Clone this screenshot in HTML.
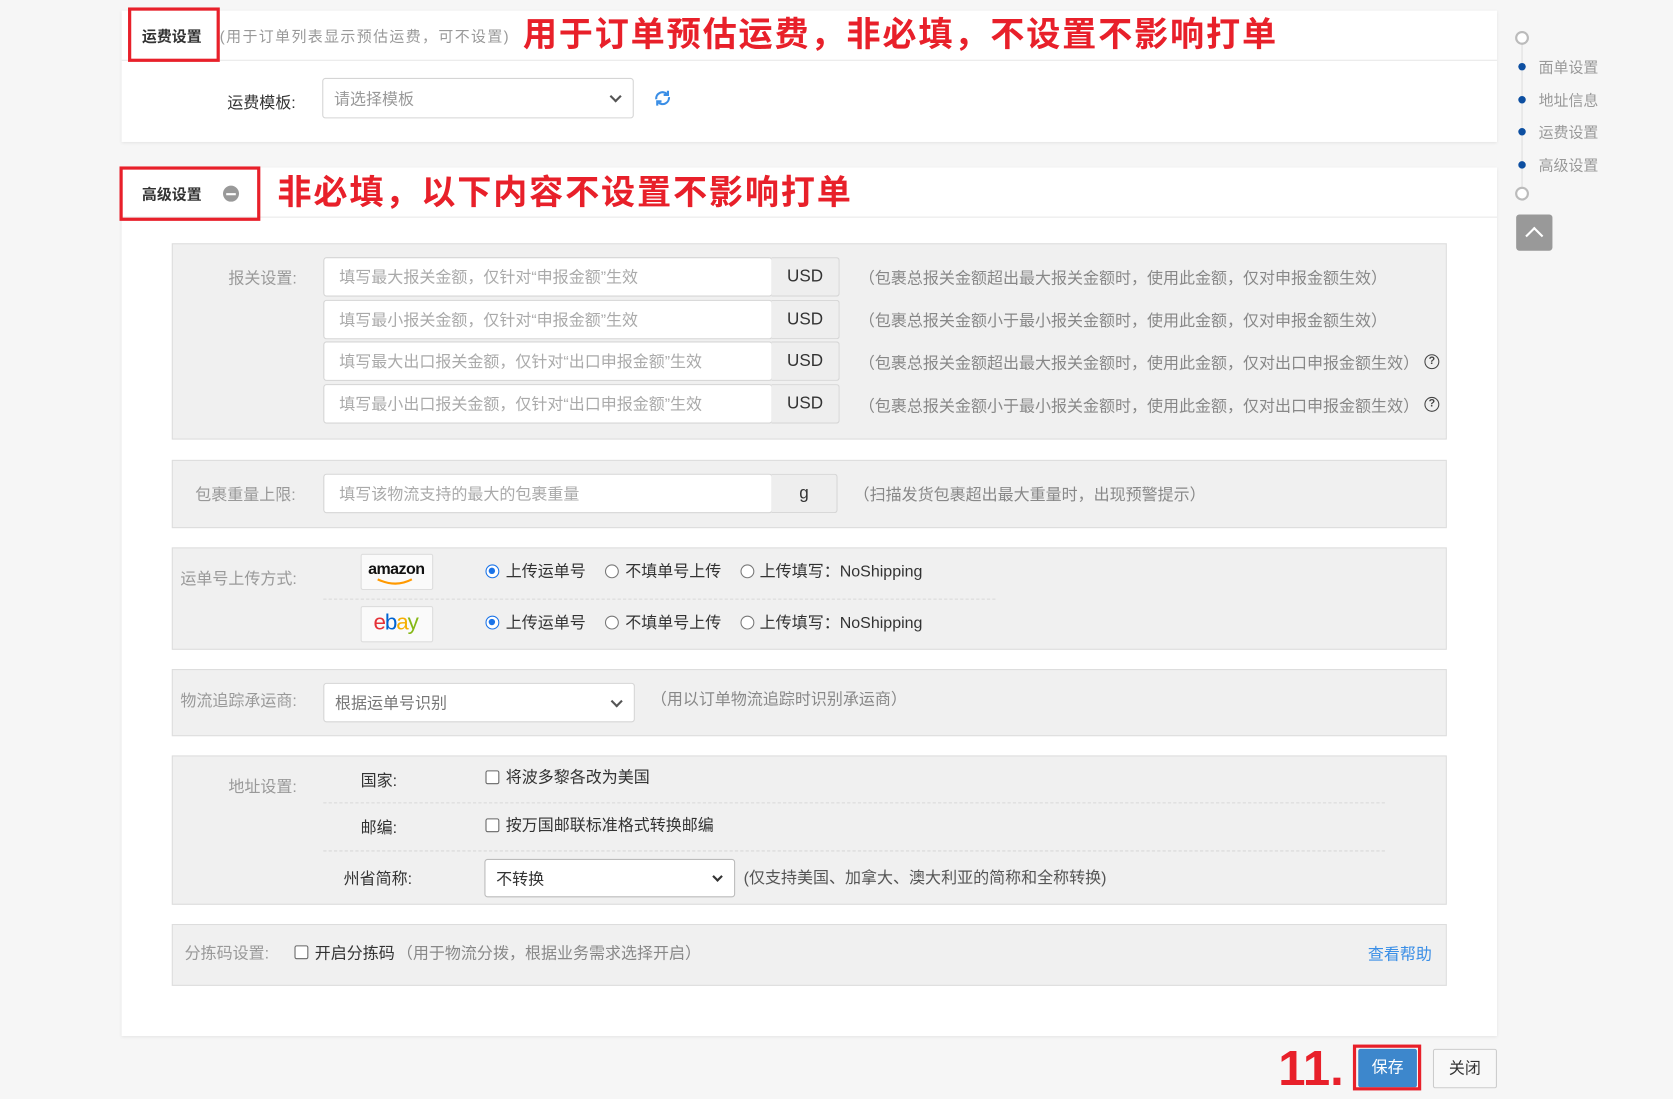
<!DOCTYPE html>
<html><head><meta charset="utf-8"><style>
*{box-sizing:border-box;margin:0;padding:0}
html,body{width:1673px;height:1099px;overflow:hidden;background:#f6f6f6}
body{font-family:"Liberation Sans","Noto Sans CJK SC",sans-serif;font-size:14px;color:#333}
#w{position:absolute;left:0;top:0;width:1568px;height:1030px;transform:scale(1.06697);transform-origin:0 0}
.a{position:absolute;white-space:nowrap}
.card{position:absolute;background:#fff;box-shadow:0 1px 3px rgba(0,0,0,.08)}
.hr{position:absolute;height:1px;background:#e8e8e8}
.red{position:absolute;border:3px solid #e8202a}
.ann{position:absolute;color:#e8202a;font-weight:bold;font-size:32px;white-space:nowrap;line-height:1;letter-spacing:1.7px}
.sec{position:absolute;left:161px;width:1195px;background:#f0f0f0;border:1px solid #ddd}
.lab{position:absolute;color:#999;font-size:15px;white-space:nowrap;transform:translateY(-50%)}
.inp{position:absolute;background:#fff;border:1px solid #d5d5d5;border-radius:3px;color:#aaa;font-size:15px;padding-left:14px;display:flex;align-items:center}
.add{position:absolute;background:#eee;border:1px solid #d5d5d5;border-left:none;border-radius:0 3px 3px 0;font-size:16px;color:#333;display:flex;align-items:center;justify-content:center}
.hint{position:absolute;color:#888;font-size:15px;white-space:nowrap;transform:translateY(-50%)}
.q{position:absolute;width:14px;height:14px;border:1.5px solid #444;border-radius:50%;font-size:10px;font-weight:bold;text-align:center;line-height:11px;color:#444}
.rad{position:absolute;width:13px;height:13px;border:1px solid #777;border-radius:50%;background:#fff}
.rad.on{border:1.5px solid #1a73e8}
.rad.on::after{content:"";position:absolute;left:2px;top:2px;width:6px;height:6px;border-radius:50%;background:#1a73e8}
.t{position:absolute;font-size:15px;color:#333;white-space:nowrap;transform:translateY(-50%)}
.cb{position:absolute;width:13px;height:13px;border:1px solid #666;border-radius:2px;background:#fff}
.dash{position:absolute;border-top:1px dashed #d8d8d8}
.sel{position:absolute;background:#fff;border:1px solid #d5d5d5;border-radius:3px;font-size:15px;padding-left:10px;display:flex;align-items:center}
.chev{position:absolute;right:12px;top:50%;width:8px;height:8px;border-right:2px solid #555;border-bottom:2px solid #555;transform:translateY(-70%) rotate(45deg)}
.logo{position:absolute;left:338px;width:68px;height:34px;background:#fafafa;border:1px solid #ddd;border-radius:2px}
.nav{position:absolute;left:1442px;color:#999;font-size:14px;transform:translateY(-50%)}
.dot{position:absolute;left:1423px;width:7px;height:7px;border-radius:50%;background:#0d4fa1}
.hol{position:absolute;left:1420px;width:13px;height:13px;border-radius:50%;border:2px solid #bbb;background:#fff}
</style></head><body><div id="w">

<div class="card" style="left:114px;top:10px;width:1289px;height:123px"></div>
<div class="hr" style="left:114px;top:56px;width:1289px"></div>
<div class="a" style="left:133px;top:24px;font-size:14px;font-weight:bold;color:#333">运费设置</div>
<div class="a" style="left:206px;top:24px;font-size:14px;color:#999;letter-spacing:1.3px">(用于订单列表显示预估运费，可不设置)</div>
<div class="red" style="left:120px;top:7px;width:86px;height:51px"></div>
<div class="ann" style="left:490px;top:16px">用于订单预估运费，非必填，不设置不影响打单</div>
<div class="a" style="left:213px;top:85px;font-size:15px">运费模板:</div>
<div class="sel" style="left:302px;top:73px;width:292px;height:38px;color:#999">请选择模板<span class="chev"></span></div>
<svg class="a" style="left:611px;top:82px" width="20" height="20" viewBox="0 0 20 20"><path d="M4 11a6 6 0 0 1 10-5" fill="none" stroke="#3a8ee6" stroke-width="2"/><path d="M15 3v4h-4" fill="none" stroke="#3a8ee6" stroke-width="2"/><path d="M16 9a6 6 0 0 1-10 5" fill="none" stroke="#3a8ee6" stroke-width="2"/><path d="M5 17v-4h4" fill="none" stroke="#3a8ee6" stroke-width="2"/></svg>

<div class="card" style="left:114px;top:157px;width:1289px;height:814px"></div>
<div class="hr" style="left:114px;top:203px;width:1289px"></div>
<div class="a" style="left:133px;top:172px;font-size:14px;font-weight:bold;color:#333">高级设置</div>
<div class="a" style="left:209px;top:174px;width:15px;height:15px;border-radius:50%;background:#999"><div style="position:absolute;left:3px;top:6.5px;width:9px;height:2px;background:#fff"></div></div>
<div class="red" style="left:112px;top:156px;width:132px;height:51px"></div>
<div class="ann" style="left:260px;top:164px">非必填，以下内容不设置不影响打单</div>

<div class="sec" style="top:228px;height:184px"></div>
<div class="lab" style="left:214px;top:260px">报关设置:</div>
<div class="inp" style="left:303px;top:241px;width:421px;height:37px">填写最大报关金额，仅针对“申报金额”生效</div><div class="add" style="left:723px;top:241px;width:64px;height:37px">USD</div>
<div class="inp" style="left:303px;top:281px;width:421px;height:37px">填写最小报关金额，仅针对“申报金额”生效</div><div class="add" style="left:723px;top:281px;width:64px;height:37px">USD</div>
<div class="inp" style="left:303px;top:320px;width:421px;height:37px">填写最大出口报关金额，仅针对“出口申报金额”生效</div><div class="add" style="left:723px;top:320px;width:64px;height:37px">USD</div>
<div class="inp" style="left:303px;top:360px;width:421px;height:37px">填写最小出口报关金额，仅针对“出口申报金额”生效</div><div class="add" style="left:723px;top:360px;width:64px;height:37px">USD</div>
<div class="hint" style="left:805px;top:260px">（包裹总报关金额超出最大报关金额时，使用此金额，仅对申报金额生效）</div>
<div class="hint" style="left:805px;top:300px">（包裹总报关金额小于最小报关金额时，使用此金额，仅对申报金额生效）</div>
<div class="hint" style="left:805px;top:340px">（包裹总报关金额超出最大报关金额时，使用此金额，仅对出口申报金额生效）</div>
<div class="hint" style="left:805px;top:380px">（包裹总报关金额小于最小报关金额时，使用此金额，仅对出口申报金额生效）</div>
<div class="q" style="left:1335px;top:332px">?</div>
<div class="q" style="left:1335px;top:372px">?</div>

<div class="sec" style="top:431px;height:64px"></div>
<div class="lab" style="left:183px;top:463px">包裹重量上限:</div>
<div class="inp" style="left:303px;top:444px;width:421px;height:37px">填写该物流支持的最大的包裹重量</div><div class="add" style="left:723px;top:444px;width:62px;height:37px">g</div>
<div class="hint" style="left:800px;top:463px">（扫描发货包裹超出最大重量时，出现预警提示）</div>

<div class="sec" style="top:513px;height:96px"></div>
<div class="lab" style="left:169px;top:542px">运单号上传方式:</div>
<div class="logo" style="top:519px"><div style="position:absolute;left:6px;top:5px;font-weight:bold;font-size:15px;color:#111;letter-spacing:-.5px">amazon</div><svg style="position:absolute;left:14px;top:22px" width="36" height="8"><path d="M1 1q17 8 32 0" fill="none" stroke="#f90" stroke-width="2"/></svg></div>
<div class="dash" style="left:303px;top:561px;width:630px"></div>
<div class="logo" style="top:568px"><div style="position:absolute;left:11px;top:3px;font-size:21px;letter-spacing:-1px"><span style="color:#e53238">e</span><span style="color:#0064d2">b</span><span style="color:#f5af02">a</span><span style="color:#86b817">y</span></div></div>
<div class="rad on" style="left:455px;top:529px"></div><div class="t" style="left:474px;top:535px">上传运单号</div>
<div class="rad" style="left:567px;top:529px"></div><div class="t" style="left:586px;top:535px">不填单号上传</div>
<div class="rad" style="left:694px;top:529px"></div><div class="t" style="left:712px;top:535px">上传填写：NoShipping</div>
<div class="rad on" style="left:455px;top:577px"></div><div class="t" style="left:474px;top:583px">上传运单号</div>
<div class="rad" style="left:567px;top:577px"></div><div class="t" style="left:586px;top:583px">不填单号上传</div>
<div class="rad" style="left:694px;top:577px"></div><div class="t" style="left:712px;top:583px">上传填写：NoShipping</div>

<div class="sec" style="top:627px;height:63px"></div>
<div class="lab" style="left:169px;top:656px">物流追踪承运商:</div>
<div class="sel" style="left:303px;top:640px;width:292px;height:37px;color:#777">根据运单号识别<span class="chev"></span></div>
<div class="hint" style="left:610px;top:655px">（用以订单物流追踪时识别承运商）</div>

<div class="sec" style="top:708px;height:140px"></div>
<div class="lab" style="left:214px;top:737px">地址设置:</div>
<div class="t" style="left:338px;top:731px">国家:</div>
<div class="cb" style="left:455px;top:722px"></div><div class="t" style="left:474px;top:728px">将波多黎各改为美国</div>
<div class="dash" style="left:303px;top:752px;width:995px"></div>
<div class="t" style="left:338px;top:775px">邮编:</div>
<div class="cb" style="left:455px;top:767px"></div><div class="t" style="left:474px;top:773px">按万国邮联标准格式转换邮编</div>
<div class="dash" style="left:303px;top:797px;width:995px"></div>
<div class="t" style="left:322px;top:823px">州省简称:</div>
<div class="sel" style="left:454px;top:805px;width:235px;height:36px;color:#333;border-color:#bbb">不转换<span class="chev" style="width:7px;height:7px;border-color:#333"></span></div>
<div class="t" style="left:697px;top:822px;color:#555">(仅支持美国、加拿大、澳大利亚的简称和全称转换)</div>

<div class="sec" style="top:866px;height:58px"></div>
<div class="lab" style="left:173px;top:893px">分拣码设置:</div>
<div class="cb" style="left:276px;top:886px"></div><div class="t" style="left:295px;top:893px">开启分拣码</div>
<div class="hint" style="left:372px;top:893px">（用于物流分拨，根据业务需求选择开启）</div>
<div class="t" style="left:1282px;top:894px;color:#3a8ee6">查看帮助</div>

<div class="a" style="left:1198px;top:976px;font-size:46px;font-weight:bold;color:#e8202a;line-height:50px">11.</div>
<div class="a" style="left:1273px;top:983px;width:55px;height:36px;background:#3d87cc;color:#fff;font-size:15px;text-align:center;line-height:36px;border-radius:2px">保存</div>
<div class="red" style="left:1268px;top:979px;width:64px;height:43px"></div>
<div class="a" style="left:1343px;top:983px;width:60px;height:37px;background:#f8f8f8;border:1px solid #ccc;border-radius:2px;font-size:15px;text-align:center;line-height:35px">关闭</div>

<div class="a" style="left:1426px;top:35px;width:1px;height:147px;background:#ddd"></div>
<div class="hol" style="top:29px"></div>
<div class="dot" style="top:59px"></div><div class="nav" style="top:63px">面单设置</div>
<div class="dot" style="top:90px"></div><div class="nav" style="top:94px">地址信息</div>
<div class="dot" style="top:120px"></div><div class="nav" style="top:124px">运费设置</div>
<div class="dot" style="top:151px"></div><div class="nav" style="top:155px">高级设置</div>
<div class="hol" style="top:175px"></div>
<div class="a" style="left:1421px;top:201px;width:34px;height:34px;background:#999;border-radius:3px"><div style="position:absolute;left:11px;top:14px;width:12px;height:12px;border-left:2px solid #fff;border-top:2px solid #fff;transform:rotate(45deg)"></div></div>

</div></body></html>
